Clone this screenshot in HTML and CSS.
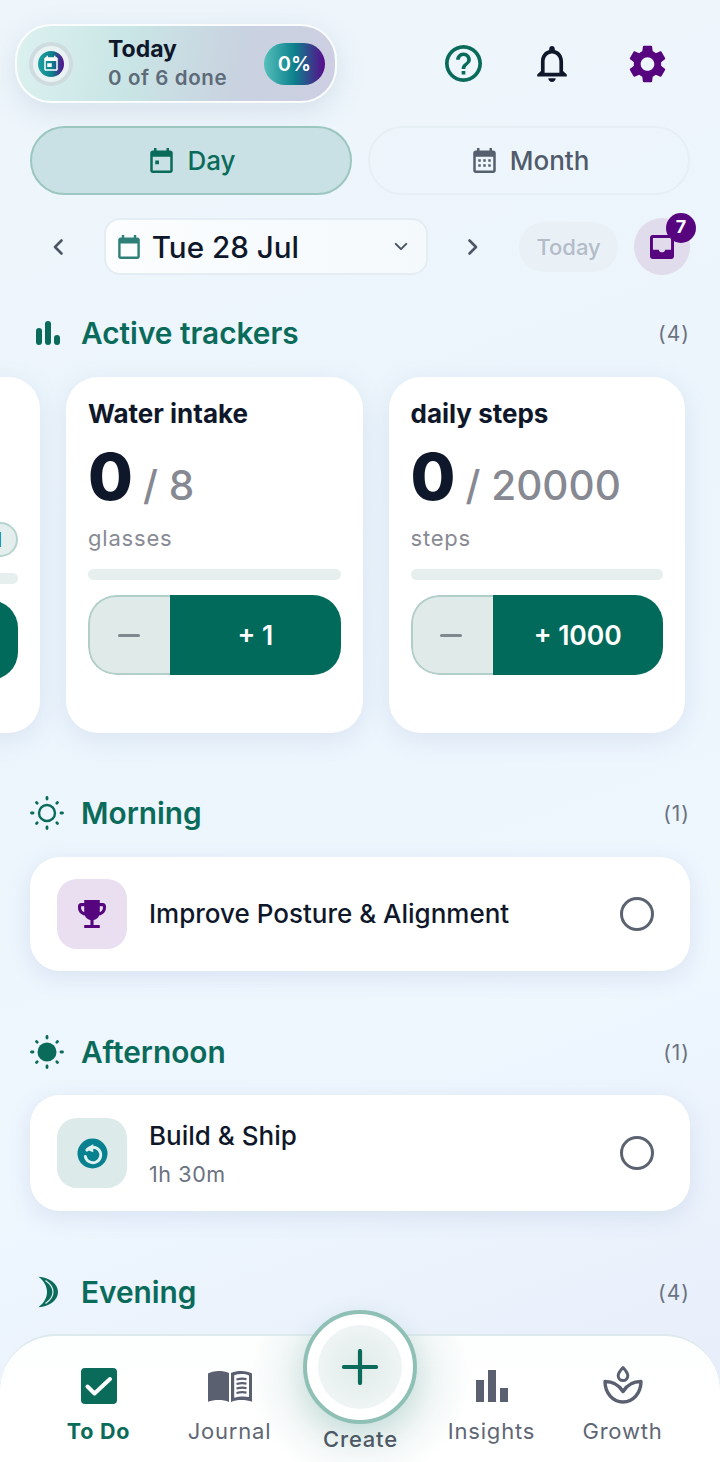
FILE: index.html
```html
<!DOCTYPE html>
<html lang="en">
<head>
<meta charset="utf-8">
<title>Today</title>
<link rel="stylesheet" href="styles.css">
</head>
<body>
<div class="app">
  <header class="top">
    <div class="today-card">
      <div class="ring"><div class="ring-core">
        <svg class="ring-icon" viewBox="0 0 24 24"><path fill="#fff" d="M19 3h-1V1h-2v2H8V1H6v2H5c-1.11 0-2 .9-2 2v14c0 1.1.89 2 2 2h14c1.1 0 2-.9 2-2V5c0-1.1-.9-2-2-2zm0 16H5V8h14v11zM7 11h6v5H7z"/></svg>
      </div></div>
      <div class="today-text">
        <div class="today-title">Today</div>
        <div class="today-sub">0 of 6 done</div>
      </div>
      <div class="percent">0%</div>
    </div>
    <svg class="ico-help" viewBox="2 2 20 20"><path fill="#0a6b5b" d="M11 18h2v-2h-2v2zm1-16C6.48 2 2 6.48 2 12s4.48 10 10 10 10-4.48 10-10S17.52 2 12 2zm0 18c-4.41 0-8-3.59-8-8s3.59-8 8-8 8 3.59 8 8-3.59 8-8 8zm0-14c-2.21 0-4 1.79-4 4h2c0-1.1.9-2 2-2s2 .9 2 2c0 2-3 1.75-3 5h2c0-2.25 3-2.5 3-5 0-2.21-1.79-4-4-4z"/></svg>
    <svg class="ico-bell" viewBox="4 2.5 16 19.5"><path fill="#0f172a" d="M12 22c1.1 0 2-.9 2-2h-4c0 1.1.9 2 2 2zm6-6v-5c0-3.07-1.63-5.64-4.5-6.32V4c0-.83-.67-1.5-1.5-1.5s-1.5.67-1.5 1.5v.68C7.64 5.36 6 7.92 6 11v5l-2 2v1h16v-1l-2-2zm-2 1H8v-6c0-2.48 1.51-4.5 4-4.5s4 2.02 4 4.5v6z"/></svg>
    <svg class="ico-gear" viewBox="2.6 2 18.8 20"><path fill="#56057f" d="M19.14 12.94c.04-.3.06-.61.06-.94 0-.32-.02-.64-.07-.94l2.03-1.58c.18-.14.23-.41.12-.61l-1.92-3.32c-.12-.22-.37-.29-.59-.22l-2.39.96c-.5-.38-1.03-.7-1.62-.94l-.36-2.54c-.04-.24-.24-.41-.48-.41h-3.84c-.24 0-.43.17-.47.41l-.36 2.54c-.59.24-1.13.57-1.62.94l-2.39-.96c-.22-.08-.47 0-.59.22L2.74 8.87c-.12.21-.08.47.12.61l2.03 1.58c-.05.3-.09.63-.09.94s.02.64.07.94l-2.03 1.58c-.18.14-.23.41-.12.61l1.92 3.32c.12.22.37.29.59.22l2.39-.96c.5.38 1.03.7 1.62.94l.36 2.54c.05.24.24.41.48.41h3.84c.24 0 .44-.17.47-.41l.36-2.54c.59-.24 1.13-.56 1.62-.94l2.39.96c.22.08.47 0 .59-.22l1.92-3.32c.12-.22.07-.47-.12-.61l-2.01-1.58zM12 15.6c-1.98 0-3.6-1.62-3.6-3.6s1.62-3.6 3.6-3.6 3.6 1.62 3.6 3.6-1.62 3.6-3.6 3.6z"/></svg>
  </header>

  <div class="tabs">
    <div class="tab tab-active">
      <svg class="tab-icon" viewBox="3 1 18 20"><path fill="#0a6b5b" d="M19 3h-1V1h-2v2H8V1H6v2H5c-1.11 0-2 .9-2 2v14c0 1.1.89 2 2 2h14c1.1 0 2-.9 2-2V5c0-1.1-.9-2-2-2zm0 16H5V8h14v11zM7 11h3v3H7z"/></svg>
      <span>Day</span>
    </div>
    <div class="tab">
      <svg class="tab-icon" viewBox="3 1 18 20"><path fill="#565f6e" d="M19 3h-1V1h-2v2H8V1H6v2H5c-1.11 0-2 .9-2 2v14c0 1.1.89 2 2 2h14c1.1 0 2-.9 2-2V5c0-1.1-.9-2-2-2zm0 16H5V8h14v11zM7 10h2v2H7zm4 0h2v2h-2zm4 0h2v2h-2zM7 14h2v2H7zm4 0h2v2h-2zm4 0h2v2h-2z"/></svg>
      <span>Month</span>
    </div>
  </div>

  <div class="date-row">
    <div class="chev chev-left">
      <svg class="chev-icon" viewBox="0 0 12 18"><path d="M9.500 2.500 3 9l6.500 6.500"/></svg>
    </div>
    <div class="date-box">
      <svg class="date-icon" viewBox="3 1 18 20"><path fill="#2e7f78" d="M19 3h-1V1h-2v2H8V1H6v2H5c-1.11 0-2 .9-2 2v14c0 1.1.89 2 2 2h14c1.1 0 2-.9 2-2V5c0-1.1-.9-2-2-2zm0 16H5V8h14v11z"/></svg>
      <span class="date-text">Tue 28 Jul</span>
      <svg class="date-caret" viewBox="0 0 16 10"><path d="M2 2l6 6 6-6"/></svg>
    </div>
    <div class="chev chev-right">
      <svg class="chev-icon" viewBox="0 0 12 18"><path d="M2.500 2.500 9 9l-6.500 6.500"/></svg>
    </div>
    <div class="today-btn">Today</div>
    <div class="inbox">
      <svg class="inbox-icon" viewBox="3 3 18 18"><path fill="#56057f" fill-rule="evenodd" d="M5 3h14c1.100 0 2 .9 2 2v14c0 1.100-.9 2-2 2H5c-1.100 0-2-.9-2-2V5c0-1.100.9-2 2-2zm.2 2.200v8.800h4.300c.5 1.300 1.300 1.900 2.500 1.900s2-.6 2.500-1.900h4.300V5.200z"/></svg>
      <span class="badge">7</span>
    </div>
  </div>

  <section class="head head-trackers">
    <svg class="head-icon" viewBox="0 0 26 26"><g fill="#0a6b5b"><rect x="1" y="8" width="6" height="17" rx="3"/><rect x="10" y="1" width="6" height="24" rx="3"/><rect x="19" y="15" width="6" height="10" rx="3"/></g></svg>
    <h2 class="head-title">Active trackers</h2>
    <span class="head-count">(4)</span>
  </section>

  <div class="trackers">
    <article class="tracker">
      <div class="tracker-name">Mood</div>
      <div class="tracker-nums tracker-nums-short"></div>
      <div class="pills"><span class="pill">Good</span></div>
      <div class="bar"></div>
      <div class="stepper stepper-first"><div class="step-minus"><span class="minus-line"></span></div><div class="step-plus">+ 1</div></div>
    </article>
    <article class="tracker">
      <div class="tracker-name">Water intake</div>
      <div class="tracker-nums"><span class="big">0</span><span class="goal">/ 8</span></div>
      <div class="unit">glasses</div>
      <div class="bar"></div>
      <div class="stepper"><div class="step-minus"><span class="minus-line"></span></div><div class="step-plus">+ 1</div></div>
    </article>
    <article class="tracker">
      <div class="tracker-name">daily steps</div>
      <div class="tracker-nums"><span class="big">0</span><span class="goal">/ 20000</span></div>
      <div class="unit">steps</div>
      <div class="bar"></div>
      <div class="stepper"><div class="step-minus"><span class="minus-line"></span></div><div class="step-plus">+ 1000</div></div>
    </article>
  </div>

  <section class="head head-morning">
    <svg class="head-icon-sun" viewBox="0 0 34 34"><circle cx="17" cy="17" r="8" fill="none" stroke="#0a6b5b" stroke-width="2.400"/><g stroke="#0a6b5b" stroke-width="2.800" stroke-linecap="round"><path d="M17 1.500v1.500M17 31v1.500M1.500 17h1.500M31 17h1.500M6.500 6.500l.7.7M26.800 26.800l.7.7M6.500 27.500l.7-.7M26.800 7.200l.7-.7"/></g></svg>
    <h2 class="head-title">Morning</h2>
    <span class="head-count">(1)</span>
  </section>
  <div class="task task-one">
    <div class="task-icon task-icon-purple">
      <svg class="trophy" viewBox="3 3 18 18"><path fill="#56057f" d="M19 5h-2V3H7v2H5c-1.100 0-2 .9-2 2v1c0 2.550 1.920 4.630 4.390 4.940.63 1.500 1.980 2.630 3.610 2.960V19H7v2h10v-2h-4v-3.100c1.630-.33 2.980-1.460 3.610-2.960C19.080 12.630 21 10.550 21 8V7c0-1.100-.9-2-2-2zM5 8V7h2v3.820C5.840 10.400 5 9.300 5 8zm14 0c0 1.300-.84 2.400-2 2.820V7h2v1z"/></svg>
    </div>
    <div class="task-body"><div class="task-title">Improve Posture &amp; Alignment</div></div>
    <div class="radio"></div>
  </div>

  <section class="head head-afternoon">
    <svg class="head-icon-sun" viewBox="0 0 34 34"><circle cx="17" cy="17" r="9.500" fill="#0a6b5b"/><g stroke="#0a6b5b" stroke-width="2.800" stroke-linecap="round"><path d="M17 1.500v1.500M17 31v1.500M1.500 17h1.500M31 17h1.500M6.500 6.500l.7.7M26.800 26.800l.7.7M6.500 27.500l.7-.7M26.800 7.200l.7-.7"/></g></svg>
    <h2 class="head-title">Afternoon</h2>
    <span class="head-count">(1)</span>
  </section>
  <div class="task task-two">
    <div class="task-icon task-icon-teal">
      <svg class="restart" viewBox="0 0 32 32"><circle cx="16" cy="16" r="15.500" fill="#07818f"/><path fill="none" stroke="#dff1f0" stroke-width="3" stroke-linecap="round" d="M10.200 12.500A8 8 0 1 1 8.600 19"/><path fill="#dff1f0" d="M16.800 6.200v8.600l-8.200-3.300z"/></svg>
    </div>
    <div class="task-body">
      <div class="task-title">Build &amp; Ship</div>
      <div class="task-sub">1h 30m</div>
    </div>
    <div class="radio"></div>
  </div>

  <section class="head head-evening">
    <svg class="head-icon-moon" viewBox="0 0 20 32"><path fill="#0a6b5b" d="M.5.8C11.500 1.500 20 7.800 20 16S11.500 30.500.5 31.200C5.800 27 9 22 9 16S5.800 5 .5.800z"/><path fill="none" stroke="#e4f0f2" stroke-width="1.200" d="M7.500 4.500C12.500 8 15 12 15 16s-2.500 8-7.500 11.500"/></svg>
    <h2 class="head-title">Evening</h2>
    <span class="head-count">(4)</span>
  </section>

  <nav class="nav">
    <div class="nav-item nav-active">
      <svg class="nav-icon" viewBox="0 0 36 36"><rect width="36" height="36" rx="4" fill="#0a6b5b"/><path fill="none" stroke="#fff" stroke-width="4" stroke-linecap="round" stroke-linejoin="round" d="M6.500 18.500l7 7L29 11"/></svg>
      <span class="nav-label">To Do</span>
    </div>
    <div class="nav-item">
      <svg class="nav-icon nav-book" viewBox="0 0 44 34"><path fill="#5a6070" d="M0 3.500C5 .5 14 0 21 3v29c-6-2.800-15-2.500-21-.2z"/><path fill="#5a6070" fill-rule="evenodd" d="M23 3c7-3 16-2.500 21 .5v28.300c-6-2.300-15-2.600-21 .2zm3.200 2.200v22.600c5-1.600 10.600-1.800 14.800-.8V5.400C36.500 3.700 31 3.700 26.200 5.200z"/><path stroke="#5a6070" stroke-width="2.200" d="M28.500 9.500c3.500-.9 7-1 10-.4M28.500 14c3.500-.9 7-1 10-.4M28.500 18.500c3.500-.9 7-1 10-.4M28.500 23c3.500-.9 7-1 10-.4"/></svg>
      <span class="nav-label">Journal</span>
    </div>
    <div class="nav-item nav-create-slot">
      <span class="nav-label nav-label-create">Create</span>
    </div>
    <div class="nav-item">
      <svg class="nav-icon nav-bars" viewBox="0 0 32 32"><g fill="#5a6070"><rect x="0" y="10" width="8" height="22"/><rect x="12" y="0" width="8" height="32"/><rect x="24" y="18" width="8" height="14"/></g></svg>
      <span class="nav-label">Insights</span>
    </div>
    <div class="nav-item">
      <svg class="nav-icon nav-growth" viewBox="0 0 40 39"><g fill="none" stroke="#5a6070" stroke-width="3.400" stroke-linejoin="round"><path d="M20 2.500c2.800 3 4.800 5.800 4.800 8.300a4.800 4.800 0 0 1-9.600 0c0-2.500 2-5.300 4.800-8.300z" stroke-width="3"/><path d="M2 16.500c7 0 14 3.500 18 10 4-6.500 11-10 18-10 0 11.500-8 20.500-18 20.500S2 28 2 16.500z"/></g></svg>
      <span class="nav-label">Growth</span>
    </div>
    <div class="fab">
      <div class="fab-inner">
        <svg class="fab-plus" viewBox="0 0 36 36"><path fill="none" stroke="#0a6b5b" stroke-width="4.200" stroke-linecap="round" d="M18 2v32M2 18h32"/></svg>
      </div>
    </div>
  </nav>
</div>
</body>
</html>
```
FILE: styles.css
```css
* { box-sizing: border-box; }
html, body { margin: 0; padding: 0; }
body {
  font-family: Inter, "Noto Sans", sans-serif;
  color: #0f172a;
  background: #eef6fc;
}
.app {
  position: relative;
  width: 720px;
  height: 1462px;
  overflow: hidden;
  background: linear-gradient(160deg, #eef6fb 0%, #ecf5fc 40%, #eef6fe 70%, #e6edf9 100%);
}

/* top bar */
.top {
  display: flex;
  align-items: center;
  padding: 24px 54px 0 15px;
}
.today-card {
  display: flex;
  align-items: center;
  width: 322px;
  height: 79px;
  padding: 0 10px 0 12px;
  border: 2px solid rgba(255, 255, 255, .9);
  border-radius: 36px;
  background: linear-gradient(100deg, #dcf1f0 0%, #c9e5e5 35%, #c9d2e0 70%, #cdcfe2 100%);
  box-shadow: 0 8px 28px rgba(90, 110, 140, .16);
}
.ring {
  display: flex;
  align-items: center;
  justify-content: center;
  width: 44px;
  height: 44px;
  border-radius: 50%;
  background: #eaf3f4;
  border: 4px solid #cfdcdf;
}
.ring-core {
  display: flex;
  align-items: center;
  justify-content: center;
  width: 26px;
  height: 26px;
  border-radius: 50%;
  background: linear-gradient(90deg, #1ea2a0 0%, #0c7f8c 55%, #5a0a8c 100%);
}
.ring-icon { width: 18px; height: 18px; display: block; }
.today-text { margin-left: 35px; flex: 1; }
.today-title { font-size: 23px; line-height: 28px; font-weight: 700; color: #0f172a; }
.today-sub { font-size: 20.500px; line-height: 30px; font-weight: 600; color: #5d6a78; letter-spacing: .6px; }
.percent {
  display: flex;
  align-items: center;
  justify-content: center;
  width: 61px;
  height: 42px;
  border-radius: 21px;
  background: linear-gradient(90deg, #55c0bb 0%, #0c808c 50%, #5a0a8c 100%);
  color: #fff;
  font-size: 20px;
  font-weight: 600;
}
.ico-help { width: 37px; height: 37px; margin-left: 108px; flex: none; }
.ico-bell { width: 30px; height: 36px; margin-left: 55px; flex: none; }
.ico-gear { width: 37px; height: 38px; margin-left: 62px; flex: none; }

/* tabs */
.tabs {
  display: flex;
  gap: 16px;
  margin-top: 23px;
  padding: 0 30px;
}
.tab {
  flex: 1;
  display: flex;
  align-items: center;
  justify-content: center;
  gap: 14px;
  height: 69px;
  padding-left: 4px;
  border: 2px solid #e6eff4;
  border-radius: 35px;
  font-size: 26px;
  font-weight: 500;
  color: #505a6b;
}
.tab-active {
  background: #c9e1e4;
  border-color: #9cc6c0;
  color: #0a6b5b;
}
.tab-icon { width: 23px; height: 25px; flex: none; }

/* date row */
.date-row {
  display: flex;
  align-items: center;
  gap: 16px;
  margin-top: 23px;
  padding: 0 30px;
}
.chev {
  display: flex;
  align-items: center;
  justify-content: center;
  height: 57px;
}
.chev-left { width: 58px; padding-right: 2px; }
.chev-right { width: 59px; }
.chev-icon { width: 12px; height: 18px; fill: none; stroke: #4b5565; stroke-width: 2.600; stroke-linecap: round; stroke-linejoin: round; }
.date-box {
  display: flex;
  align-items: center;
  width: 326px;
  height: 57px;
  padding: 0 18px 0 12px;
  border: 2px solid #e4edf3;
  border-radius: 16px;
  background: linear-gradient(90deg, #fbfdfe, #f4f9fc);
}
.date-icon { width: 22px; height: 24px; flex: none; }
.date-text { flex: 1; margin-left: 12px; font-size: 29.600px; font-weight: 500; color: #0f172a; }
.date-caret { width: 14px; height: 9px; fill: none; stroke: #4b5565; stroke-width: 2.400; stroke-linecap: round; stroke-linejoin: round; }
.today-btn {
  display: flex;
  align-items: center;
  justify-content: center;
  width: 100px;
  height: 50px;
  border-radius: 25px;
  background: #e9f1f6;
  color: #b3bcc8;
  font-size: 22px;
  font-weight: 500;
}
.inbox {
  position: relative;
  display: flex;
  align-items: center;
  justify-content: center;
  width: 56px;
  height: 57px;
  border-radius: 50%;
  background: #e0dcec;
}
.inbox-icon { width: 24px; height: 24px; }
.badge {
  position: absolute;
  top: -5px;
  right: -6px;
  width: 30px;
  height: 30px;
  border-radius: 50%;
  background: #56057f;
  color: #fff;
  font-size: 18px;
  font-weight: 700;
  line-height: 28px;
  text-align: center;
}

/* section heads */
.head {
  display: flex;
  align-items: center;
  height: 40px;
  padding: 0 30px;
}
.head-trackers { margin-top: 38px; }
.head-morning { margin-top: 60px; }
.head-afternoon { margin-top: 61px; }
.head-evening { margin-top: 61px; }
.head-title {
  flex: 1;
  margin: 0;
  font-size: 29.800px;
  line-height: 40px;
  font-weight: 600;
  color: #0a6b5b;
}
.head-count { font-size: 21px; color: #6b7280; letter-spacing: 1px; }
.head-icon { width: 26px; height: 26px; margin: 0 20px 0 5px; flex: none; }
.head-icon-sun { width: 34px; height: 34px; margin-right: 17px; flex: none; }
.head-icon-moon { width: 20px; height: 32px; margin: 0 23px 0 8px; flex: none; }

/* trackers */
.trackers {
  display: flex;
  gap: 26px;
  margin: 24px 0 0 -231px;
}
.tracker {
  flex: none;
  width: 271px;
  height: 356px;
  padding: 19px 22px 0;
  border-radius: 32px;
  background: #fff;
  box-shadow: 0 6px 26px rgba(100, 130, 175, .14);
}
.tracker + .tracker { width: 296.500px; }
.tracker-name { font-size: 26px; line-height: 36px; font-weight: 700; color: #0f172a; }
.tracker-nums {
  display: flex;
  align-items: baseline;
  gap: 10px;
  height: 74px;
  margin-top: 8px;
}
.tracker-nums-short { height: 82px; }
.big { font-size: 65px; line-height: 74px; font-weight: 800; color: #0f172a; }
.goal { font-size: 40.500px; font-weight: 500; color: #868892; }
.unit { margin-top: 9px; font-size: 22px; line-height: 30px; color: #888a94; letter-spacing: .8px; }
.pills { display: flex; justify-content: flex-end; }
.pill {
  display: flex;
  align-items: center;
  height: 35px;
  padding: 0 14px;
  border: 2px solid #b6d4cf;
  border-radius: 18px;
  background: #e4efed;
  color: #0a6b5b;
  font-size: 20px;
  font-weight: 600;
}
.bar {
  height: 11px;
  margin-top: 16px;
  border-radius: 6px;
  background: #e6efed;
}
.stepper {
  display: flex;
  height: 80px;
  margin-top: 15px;
  border-radius: 28px;
  overflow: hidden;
}
.stepper-first { margin-top: 16px; }
.step-minus {
  display: flex;
  align-items: center;
  justify-content: center;
  width: 82px;
  padding-right: 3px;
  background: #dfeae9;
  border: 2px solid #b1cec8;
  border-right: 0;
  border-radius: 28px 0 0 28px;
}
.minus-line { width: 22px; height: 3px; background: #7e8a90; border-radius: 2px; }
.step-plus {
  flex: 1;
  display: flex;
  align-items: center;
  justify-content: center;
  background: #026a5a;
  color: #fff;
  font-size: 26.500px;
  font-weight: 600;
}

/* tasks */
.task {
  display: flex;
  align-items: center;
  margin: 24px 30px 0;
  padding: 0 36px 0 27px;
  border-radius: 30px;
  background: #fff;
  box-shadow: 0 6px 22px rgba(100, 130, 175, .15);
}
.task-one { height: 114px; }
.task-two { height: 116px; margin-top: 23px; }
.task-icon {
  display: flex;
  align-items: center;
  justify-content: center;
  width: 70px;
  height: 70px;
  border-radius: 20px;
  flex: none;
}
.task-icon-purple { background: #eadff0; }
.task-icon-teal { background: #dcebea; }
.trophy { width: 28px; height: 28px; }
.restart { width: 31px; height: 31px; }
.task-body { flex: 1; margin-left: 22px; }
.task-title { font-size: 26px; line-height: 36px; font-weight: 500; color: #0f172a; }
.task-sub { margin-top: 5px; font-size: 21.500px; line-height: 30px; color: #6b7280; letter-spacing: .6px; }
.radio {
  width: 34px;
  height: 34px;
  border: 3px solid #5b6270;
  border-radius: 50%;
  flex: none;
}

/* bottom nav */
.nav {
  position: absolute;
  left: 0;
  right: 0;
  bottom: 0;
  display: grid;
  grid-template-columns: repeat(5, 131px);
  height: 128px;
  padding: 0 33px;
  border-top: 2px solid #dde9ec;
  border-radius: 56px 56px 0 0;
  background:
    radial-gradient(circle at 50% 32%, rgba(10, 107, 91, .16) 0, rgba(10, 107, 91, 0) 110px),
    linear-gradient(180deg, #fdfefe, #ffffff);
}
.nav-item {
  display: flex;
  flex-direction: column;
  align-items: center;
  padding-top: 32px;
  height: 126px;
}
.nav-icon { display: block; width: 36px; height: 36px; margin-bottom: 12px; }
.nav-book { width: 44px; height: 34px; margin: 2px 0 12px; }
.nav-bars { width: 32px; height: 32px; margin: 2px 0 14px; }
.nav-growth { width: 40px; height: 39px; margin: -3px 0 12px; }
.nav-label { font-size: 22px; line-height: 30px; font-weight: 400; color: #5f6675; letter-spacing: .8px; }
.nav-active .nav-label { font-weight: 700; color: #0a6b5b; font-size: 21.500px; }
.nav-create-slot { justify-content: flex-end; padding-bottom: 8px; }
.nav-label-create { font-weight: 500; color: #4f5866; }
.fab {
  position: absolute;
  left: 303px;
  top: -26px;
  display: flex;
  align-items: center;
  justify-content: center;
  width: 114px;
  height: 114px;
  border: 4px solid #8fc0b5;
  border-radius: 50%;
  background: #fff;
  box-shadow: 0 10px 28px rgba(10, 107, 91, .14);
}
.fab-inner {
  display: flex;
  align-items: center;
  justify-content: center;
  width: 84px;
  height: 84px;
  border-radius: 50%;
  background: radial-gradient(circle, #e0ece9 0%, #eff5f4 75%, #f6f9f8 100%);
}
.fab-plus { width: 36px; height: 36px; }
```
